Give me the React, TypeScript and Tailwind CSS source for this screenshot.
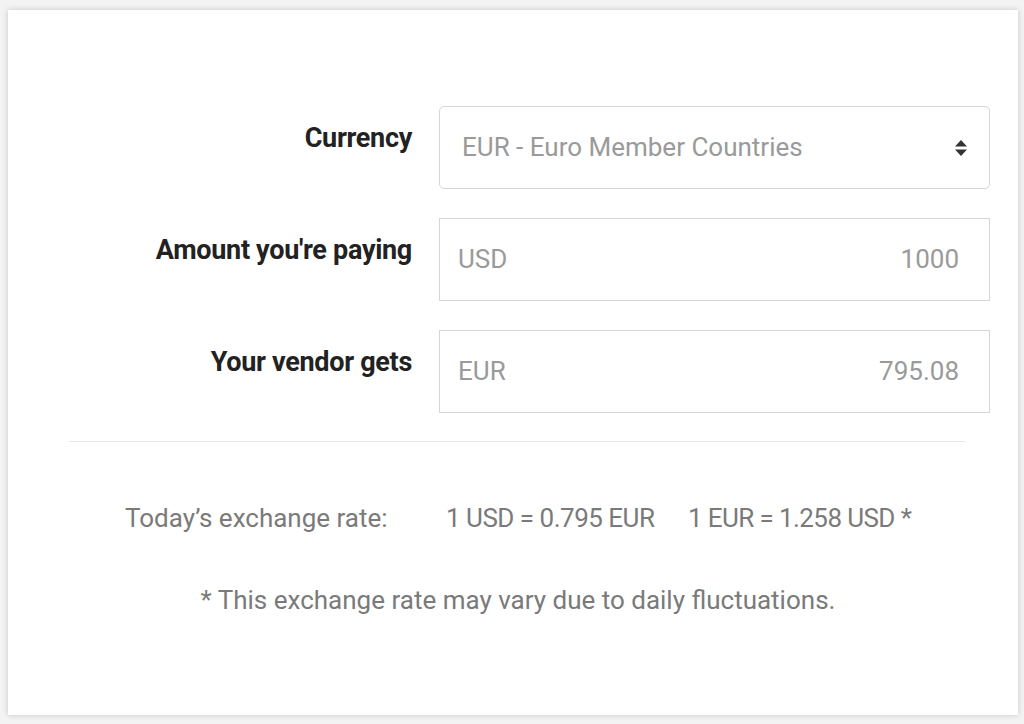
import React from 'react';

const font = { fontFamily: 'Roboto, "Liberation Sans", sans-serif' };

function Field({ label, children }: { label: string; children: React.ReactNode }) {
  return (
    <div className="flex items-start">
      <div className="w-[431px] pr-[27px] pt-[17px] text-right text-[27px] font-bold text-[#222] leading-[30px] tracking-[-0.3px]">
        {label}
      </div>
      {children}
    </div>
  );
}

export default function App() {
  return (
    <div className="w-[1024px] h-[724px] bg-[#f3f3f3] pt-[10px] pl-[8px]" style={font}>
      <div className="w-[1010px] h-[705px] bg-white shadow-[0_0_6px_rgba(0,0,0,0.18)] pt-[96px]">
        <div className="flex flex-col gap-[29px]">
          {/* Currency */}
          <Field label="Currency">
            <div className="w-[551px] h-[83px] border border-[#d6d6d6] rounded-[5px] flex items-center justify-between pl-[22px] pr-[21px]">
              <span className="text-[26px] text-[#9a9a9a]">EUR - Euro Member Countries</span>
              <svg width="14" height="18" viewBox="0 0 14 18" className="text-[#333]">
                <path d="M7 1 L13 7.5 H1 Z" fill="currentColor" />
                <path d="M7 17 L13 10.5 H1 Z" fill="currentColor" />
              </svg>
            </div>
          </Field>

          {/* Paying */}
          <Field label="Amount you're paying">
            <div className="w-[551px] h-[83px] border border-[#d6d6d6] flex items-center justify-between pl-[18px] pr-[30px]">
              <span className="text-[26px] text-[#9a9a9a]">USD</span>
              <span className="text-[26px] text-[#9a9a9a]">1000</span>
            </div>
          </Field>

          {/* Vendor */}
          <Field label="Your vendor gets">
            <div className="w-[551px] h-[83px] border border-[#d6d6d6] flex items-center justify-between pl-[18px] pr-[30px]">
              <span className="text-[26px] text-[#9a9a9a]">EUR</span>
              <span className="text-[26px] text-[#9a9a9a]">795.08</span>
            </div>
          </Field>
        </div>

        <div className="ml-[61px] mr-[53px] mt-[28px] h-px bg-[#e6e6e6]" />

        <div className="mt-[61px] flex items-center text-[26px] text-[#7a7a7a] leading-[30px] whitespace-nowrap">
          <span className="ml-[117px] w-[321px]">Today’s exchange rate:</span>
          <span className="w-[242px] tracking-[-0.5px]">1 USD = 0.795 EUR</span>
          <span className="tracking-[-0.6px]">1 EUR = 1.258 USD *</span>
        </div>

        <div className="mt-[52px] text-center text-[26px] text-[#7a7a7a] leading-[30px] pl-[10px]">
          * This exchange rate may vary due to daily fluctuations.
        </div>
      </div>
    </div>
  );
}
